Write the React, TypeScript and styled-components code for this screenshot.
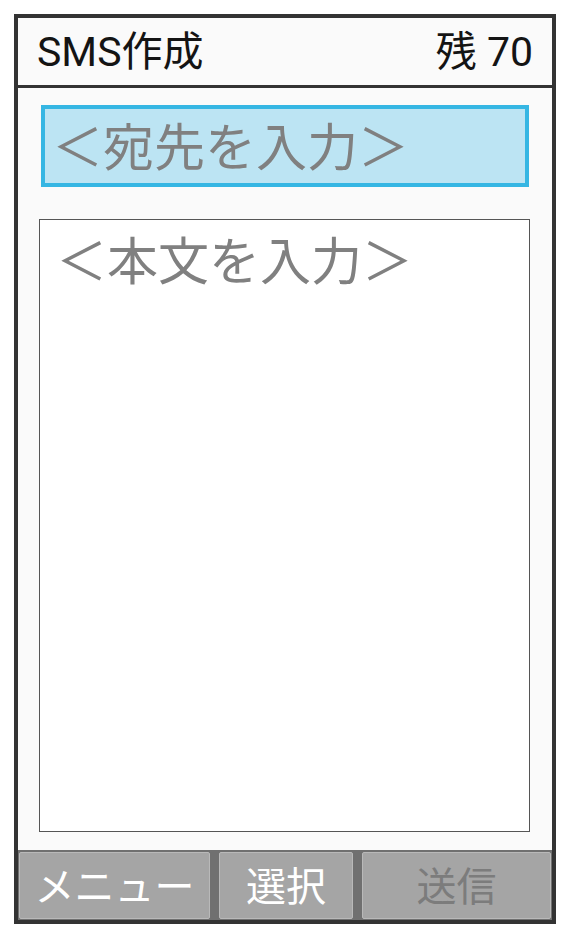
import React from "react";
import styled, { createGlobalStyle } from "styled-components";

const GlobalStyle = createGlobalStyle`
  html, body {
    margin: 0;
    padding: 0;
    background: #ffffff;
  }
  body {
    font-family: Roboto, "Noto Sans CJK JP", sans-serif;
  }
`;

const Frame = styled.div`
  box-sizing: border-box;
  margin: 14px 0 0 14px;
  width: 542px;
  height: 910px;
  border: 4px solid #333333;
  background: #fafafa;
  display: flex;
  flex-direction: column;
`;

const Header = styled.header`
  height: 67px;
  border-bottom: 3px solid #333333;
  display: flex;
  align-items: center;
  justify-content: space-between;
  padding: 0 19px 0 19px;
  font-size: 41px;
  color: #141414;

  span {
    line-height: 1;
    padding-top: 2px;
  }
`;

const Content = styled.main`
  flex: 1;
  display: flex;
  flex-direction: column;
  padding: 17px 22px 18px 21px;
  min-height: 0;
`;

const Field = styled.div`
  box-sizing: border-box;
  height: 82px;
  margin: 0 1px 0 2px;
  border: 4px solid #35b6e3;
  background: #bce4f3;
  display: flex;
  align-items: center;
  padding: 0 0 3px 7px;
`;

const Placeholder = styled.span`
  font-family: "Noto Sans CJK JP", sans-serif;
  font-size: 51px;
  line-height: 1;
  color: #808080;
`;

const TextArea = styled.div`
  flex: 1;
  margin-top: 32px;
  border: 1px solid #555555;
  background: #ffffff;
  padding: 13px 16px;
`;

const Footer = styled.footer`
  height: 70px;
  box-sizing: border-box;
  background: #707070;
  padding: 2px 1px 1px 1px;
  display: grid;
  grid-template-columns: 191px 134px 1fr;
  gap: 9px;
`;

const SoftKey = styled.div<{ disabled?: boolean }>`
  box-sizing: border-box;
  background: #a5a5a5;
  border: 1px solid #b9b9b9;
  border-radius: 2px;
  display: flex;
  align-items: center;
  justify-content: center;
  font-family: "Noto Sans CJK JP", sans-serif;
  font-size: 40px;
  line-height: 1;
  color: ${(p) => (p.disabled ? "#7c7c7c" : "#ffffff")};
  padding-bottom: 4px;
`;

export default function App() {
  return (
    <>
      <GlobalStyle />
      <Frame>
        <Header>
          <span>SMS作成</span>
          <span>残 70</span>
        </Header>
        <Content>
          <Field>
            <Placeholder>＜宛先を入力＞</Placeholder>
          </Field>
          <TextArea>
            <Placeholder>＜本文を入力＞</Placeholder>
          </TextArea>
        </Content>
        <Footer>
          <SoftKey>メニュー</SoftKey>
          <SoftKey>選択</SoftKey>
          <SoftKey disabled>送信</SoftKey>
        </Footer>
      </Frame>
    </>
  );
}
